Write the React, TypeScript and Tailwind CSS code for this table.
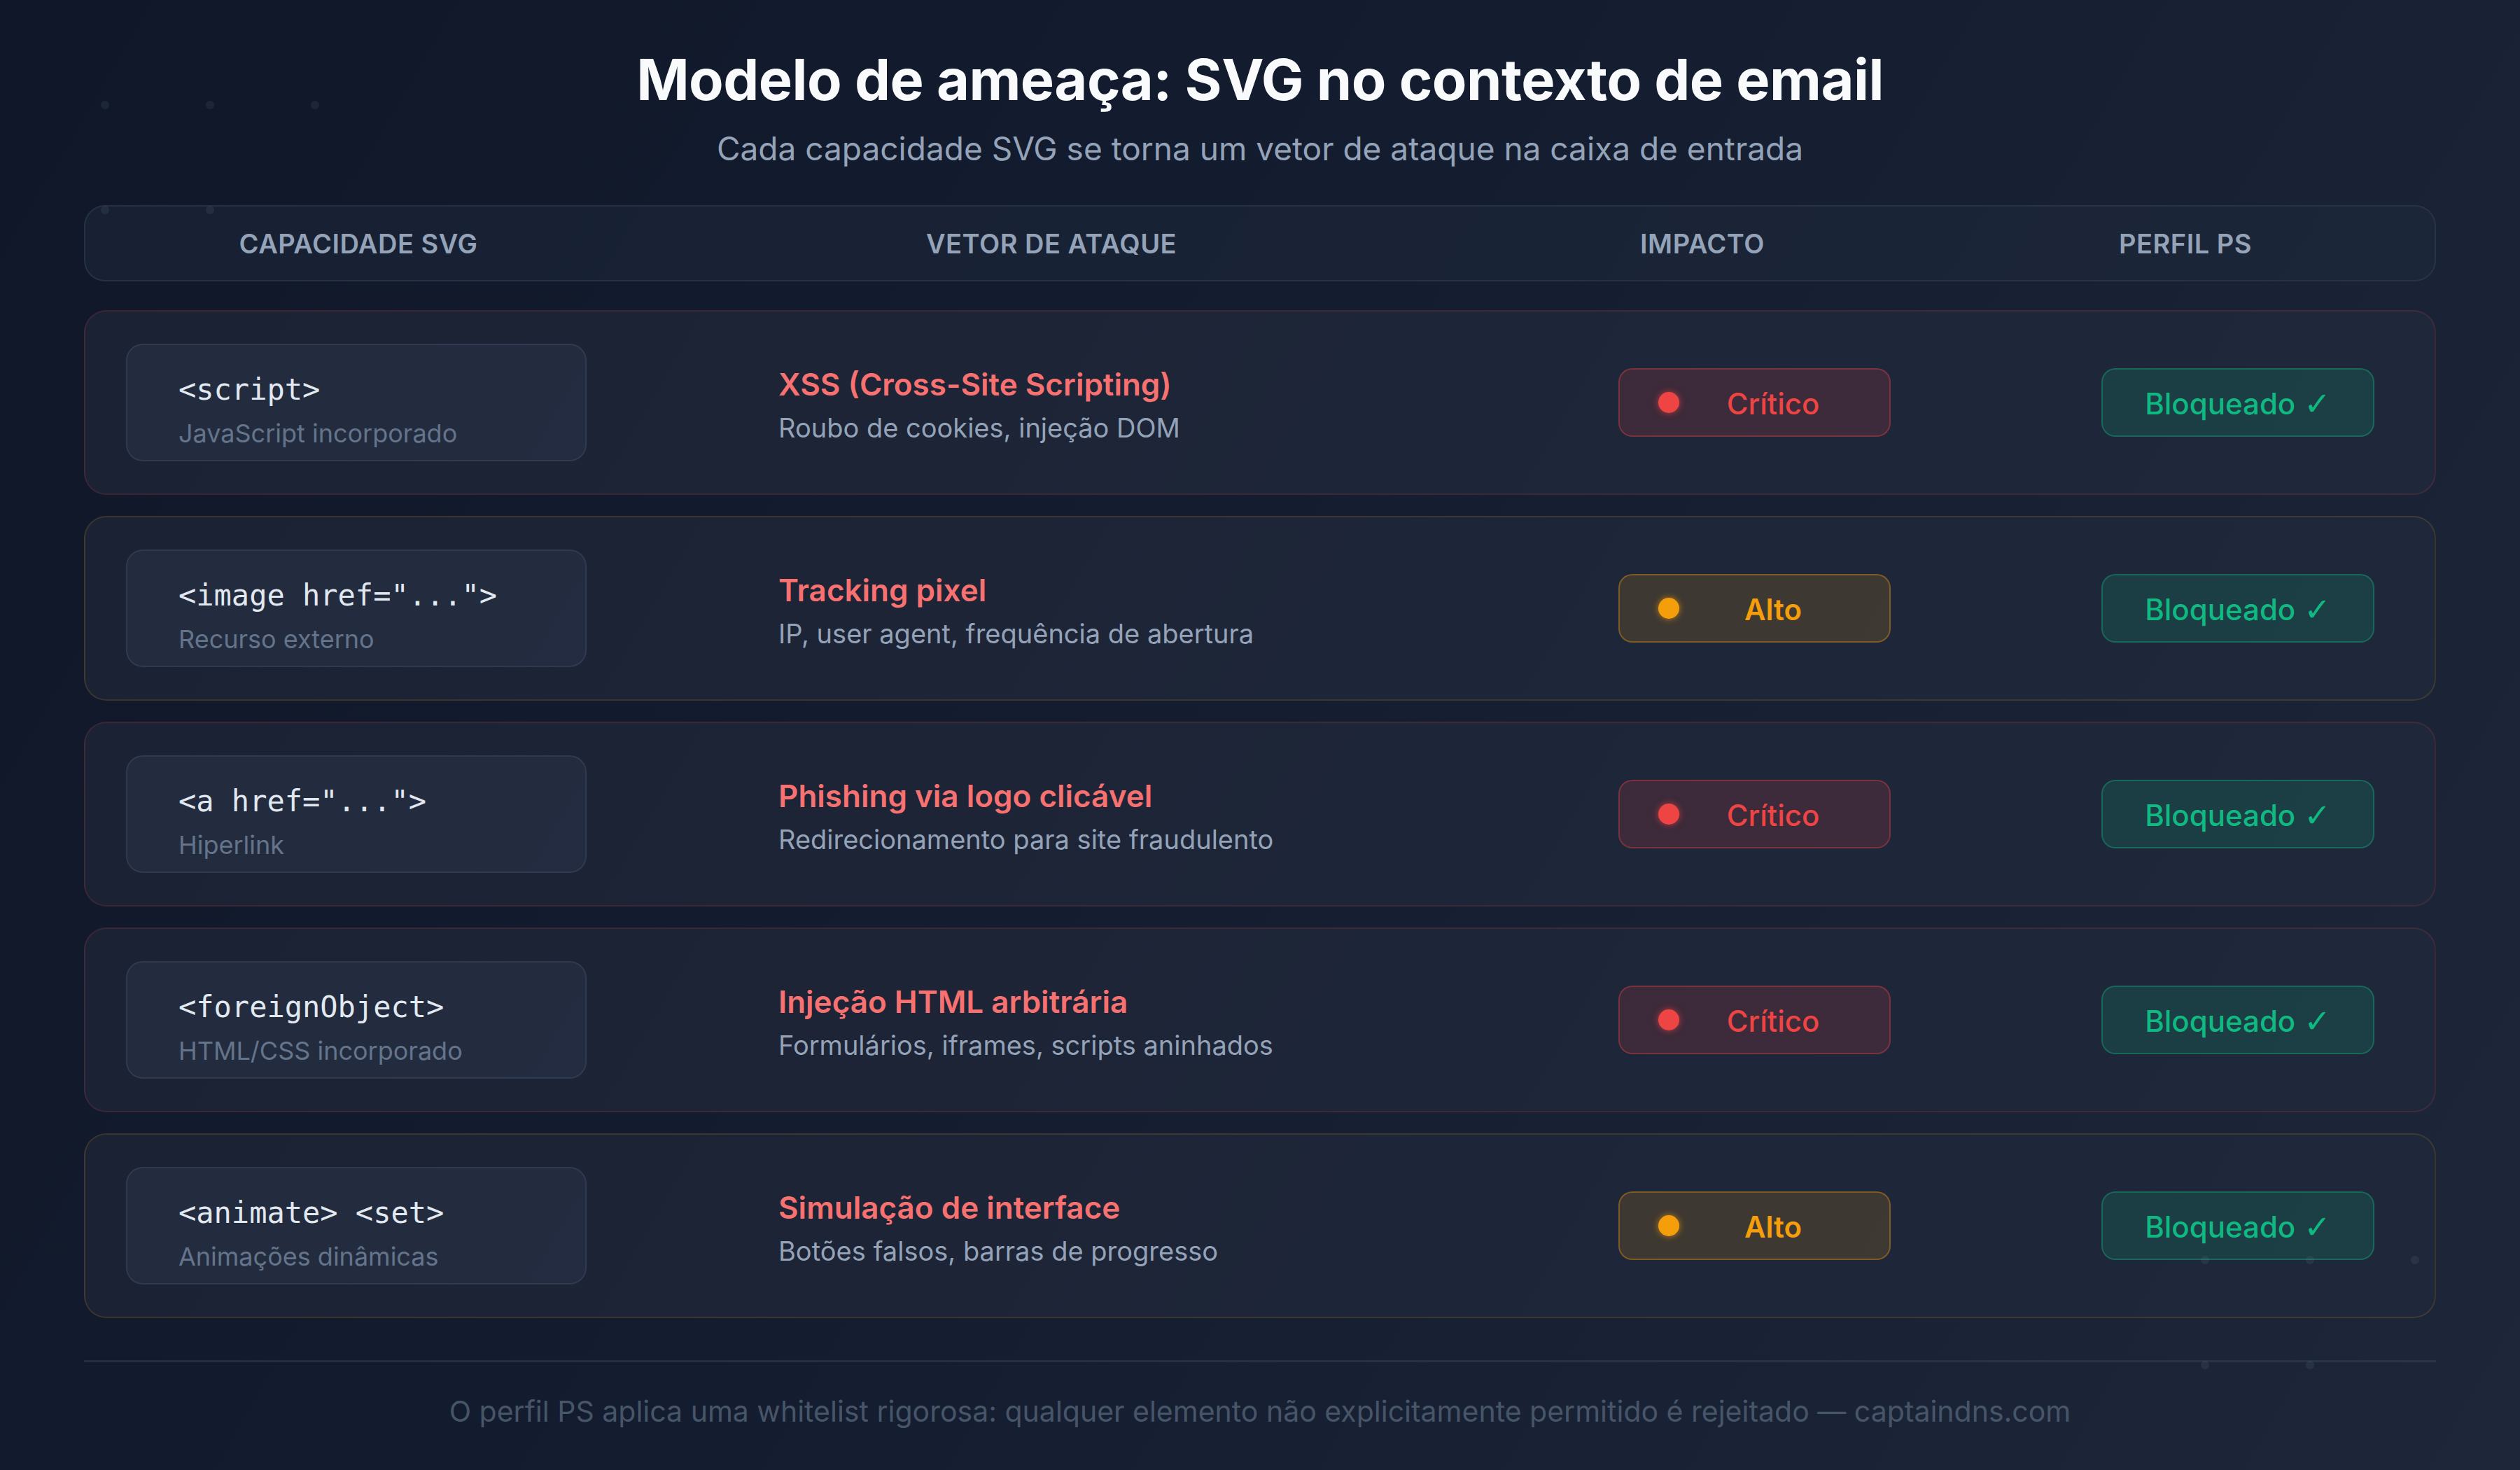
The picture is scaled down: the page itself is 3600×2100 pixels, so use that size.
import React from "react";

type Level = "crit" | "alto";

const rows: { code: string; sub: string; title: string; desc: string; level: Level }[] = [
  { code: "<script>", sub: "JavaScript incorporado", title: "XSS (Cross-Site Scripting)", desc: "Roubo de cookies, injeção DOM", level: "crit" },
  { code: '<image href="...">', sub: "Recurso externo", title: "Tracking pixel", desc: "IP, user agent, frequência de abertura", level: "alto" },
  { code: '<a href="...">', sub: "Hiperlink", title: "Phishing via logo clicável", desc: "Redirecionamento para site fraudulento", level: "crit" },
  { code: "<foreignObject>", sub: "HTML/CSS incorporado", title: "Injeção HTML arbitrária", desc: "Formulários, iframes, scripts aninhados", level: "crit" },
  { code: "<animate> <set>", sub: "Animações dinâmicas", title: "Simulação de interface", desc: "Botões falsos, barras de progresso", level: "alto" },
];

const dots = [
  [150, 150], [300, 150], [450, 150], [150, 300], [300, 300],
  [3150, 1800], [3300, 1800], [3450, 1800], [3150, 1950], [3300, 1950],
];

function ImpactBadge({ level }: { level: Level }) {
  if (level === "crit") {
    return (
      <div className="flex h-[98px] w-[389px] items-center rounded-[20px] border-2 border-[#ef4444]/35 bg-[#ef4444]/15 pl-[55px] pr-[32px]">
        <span className="h-[30px] w-[30px] shrink-0 rounded-full bg-[#ef4444] shadow-[0_0_10px_rgba(239,68,68,0.7)]" />
        <span className="flex-1 pt-[4px] text-center text-[42px] leading-none font-medium text-[#ef4444]">Crítico</span>
      </div>
    );
  }
  return (
    <div className="flex h-[98px] w-[389px] items-center rounded-[20px] border-2 border-[#f59e0b]/35 bg-[#f59e0b]/15 pl-[55px] pr-[32px]">
      <span className="h-[30px] w-[30px] shrink-0 rounded-full bg-[#f59e0b] shadow-[0_0_10px_rgba(245,158,11,0.7)]" />
      <span className="flex-1 pt-[4px] text-center text-[42px] leading-none font-semibold text-[#f59e0b]">Alto</span>
    </div>
  );
}

export default function App() {
  return (
    <div
      className="relative w-[3600px] h-[2100px] overflow-hidden bg-[linear-gradient(120deg,#0f1729_0%,#141c2f_45%,#1e273a_100%)] text-white"
      style={{ fontFamily: "Inter, 'Noto Sans', sans-serif" }}
    >
      <div className="flex flex-col items-center px-[120px]">
        <h1 className="mt-[74px] text-[81px] leading-none font-bold tracking-[-0.5px] text-[#f8fafc]">
          Modelo de ameaça: SVG no contexto de email
        </h1>
        <p className="mt-[34px] text-[46px] leading-none text-[#94a3b8]">
          Cada capacidade SVG se torna um vetor de ataque na caixa de entrada
        </p>

        <div className="mt-[58px] grid h-[109px] w-full grid-cols-[780px_1200px_660px_720px] items-center rounded-[30px] border-2 border-[#334155]/50 bg-[#1e293b]/50 text-[38px] leading-none font-semibold tracking-[0.5px] text-[#94a3b8]">
          <div className="text-center">CAPACIDADE SVG</div>
          <div className="text-center">VETOR DE ATAQUE</div>
          <div className="text-center">IMPACTO</div>
          <div className="text-center">PERFIL PS</div>
        </div>

        <div className="mt-[41px] flex w-full flex-col gap-[30px]">
          {rows.map((r, i) => (
            <div
              key={i}
              className={
                "grid h-[264px] w-full grid-cols-[990px_1200px_690px_480px] items-center rounded-[32px] border-2 bg-[linear-gradient(120deg,#1b2234,#1f283b)] " +
                (r.level === "crit" ? "border-[#ef4444]/15" : "border-[#f59e0b]/15")
              }
            >
              <div className="pl-[58px]">
                <div className="flex h-[168px] w-[658px] flex-col rounded-[24px] border-2 border-[#475569]/35 bg-[#273045]/70 px-[73px] pt-[43px]">
                  <div
                    className="text-[42px] leading-none text-[#e2e8f0]"
                    style={{ fontFamily: "'DejaVu Sans Mono', monospace" }}
                  >
                    {r.code}
                  </div>
                  <div className="mt-[23px] text-[36px] leading-none text-[#64748b]">{r.sub}</div>
                </div>
              </div>
              <div className="mt-[7px] flex flex-col">
                <div className="text-[44px] leading-none font-semibold text-[#f87171]">{r.title}</div>
                <div className="mt-[21px] text-[38px] leading-none text-[#94a3b8]">{r.desc}</div>
              </div>
              <div>
                <ImpactBadge level={r.level} />
              </div>
              <div>
                <div className="flex h-[98px] w-[390px] items-center justify-center rounded-[20px] border-2 border-[#10b981]/35 bg-[#10b981]/15 pt-[4px] text-[42px] leading-none font-medium text-[#10b981]">
                  Bloqueado
                  <span className="ml-[12px] text-[46px] font-bold" style={{ fontFamily: "'DejaVu Sans', sans-serif" }}>
                    ✓
                  </span>
                </div>
              </div>
            </div>
          ))}
        </div>

        <div className="mt-[60px] h-[3px] w-full bg-[#334155]/50" />
        <p className="mt-[50px] text-[41px] leading-none text-[#475569]">
          O perfil PS aplica uma whitelist rigorosa: qualquer elemento não explicitamente permitido é rejeitado — captaindns.com
        </p>
      </div>

      <div className="pointer-events-none absolute inset-0">
        {dots.map(([x, y], i) => (
          <span
            key={i}
            className="absolute h-[12px] w-[12px] rounded-full bg-[#94a3b8]/10"
            style={{ left: x - 6, top: y - 6 }}
          />
        ))}
      </div>
    </div>
  );
}
